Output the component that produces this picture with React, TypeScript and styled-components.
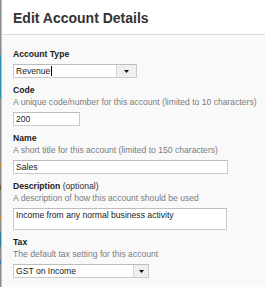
import React from 'react';
import styled, { createGlobalStyle } from 'styled-components';

const GlobalStyle = createGlobalStyle`
  html, body {
    margin: 0;
    padding: 0;
    background: #ffffff;
  }

  body {
    font-family: 'Liberation Sans', Arial, sans-serif;
  }
`;

const Frame = styled.div`
  display: flex;
  width: 265px;
  height: 287px;
  overflow: hidden;
`;

// the sliver of the app behind the dialog, visible at the far left
const Edge = styled.div`
  width: 1px;
  flex-shrink: 0;
  background: linear-gradient(
    to bottom,
    #8e8e8e 0px,
    #8e8e8e 55px,
    #2f8fae 55px,
    #2f8fae 98px,
    #8e8e8e 98px,
    #8e8e8e 163px,
    #c98a3a 163px,
    #c98a3a 167px,
    #8e8e8e 167px,
    #8e8e8e 185px,
    #7a5a3a 185px,
    #7a5a3a 190px,
    #8e8e8e 190px,
    #8e8e8e 216px,
    #c98a3a 216px,
    #c98a3a 220px,
    #8e8e8e 220px,
    #8e8e8e 232px,
    #2c8294 232px,
    #2c8294 247px,
    #8e8e8e 247px,
    #8e8e8e 260px,
    #3a6fb0 260px,
    #3a6fb0 264px,
    #8e8e8e 264px
  );
`;

const Panel = styled.div`
  flex: 1;
  display: flex;
  flex-direction: column;
  background: #f9f9f9;
  border-left: 1px solid #bdbdbd;
`;

const Header = styled.div`
  height: 35px;
  box-sizing: border-box;
  display: flex;
  align-items: center;
  padding: 2px 0 0 11px;
  background: #ffffff;
  border-bottom: 1px solid #dadada;
`;

const Title = styled.h2`
  margin: 0;
  font-size: 14px;
  font-weight: 700;
  color: #333333;
`;

const Form = styled.div`
  display: flex;
  flex-direction: column;
  gap: 6px;
  padding: 13px 0 0 11px;
`;

const Field = styled.div`
  display: flex;
  flex-direction: column;
  align-items: flex-start;
`;

const Label = styled.div<{ $spaced?: boolean }>`
  font-size: 8.6px;
  line-height: 12px;
  font-weight: 700;
  color: #1a1a1a;
  margin-bottom: ${props => (props.$spaced ? '4px' : '0')};
`;

const Optional = styled.span`
  font-weight: 400;
  color: #333333;
`;

const Hint = styled.div`
  font-size: 8.6px;
  line-height: 13px;
  color: #7c7c7c;
  margin-bottom: 3px;
  white-space: nowrap;
`;

const TextBox = styled.div<{ $width: number }>`
  width: ${props => props.$width}px;
  height: 14px;
  box-sizing: border-box;
  display: flex;
  align-items: center;
  padding-left: 2px;
  background: #ffffff;
  border: 1px solid #cbcbcb;
  border-top-color: #bdbdbd;
  font-size: 8.6px;
  color: #222222;
`;

const Area = styled.div`
  width: 214px;
  height: 22px;
  box-sizing: border-box;
  padding: 1px 0 0 2px;
  background: #ffffff;
  border: 1px solid #cbcbcb;
  border-top-color: #bdbdbd;
  font-size: 8.6px;
  line-height: 11px;
  color: #222222;
`;

const SelectBox = styled.div<{ $width: number }>`
  width: ${props => props.$width}px;
  height: 14px;
  box-sizing: border-box;
  display: flex;
  background: #ffffff;
  border: 1px solid #cbcbcb;
  border-top-color: #bdbdbd;
`;

const SelectValue = styled.div`
  flex: 1;
  display: flex;
  align-items: center;
  padding-left: 2px;
  font-size: 8.6px;
  color: #222222;
`;

const Caret = styled.span`
  display: inline-block;
  width: 1px;
  height: 10px;
  margin-left: 1px;
  background: #000000;
`;

const SelectButton = styled.div<{ $width: number }>`
  width: ${props => props.$width}px;
  display: flex;
  align-items: center;
  justify-content: center;
  background: #efefef;
  border-left: 1px solid #d6d6d6;
`;

const Arrow = () => (
  <svg width="5" height="3" viewBox="0 0 5 3">
    <path d="M0 0 H5 L2.5 3 Z" fill="#111" />
  </svg>
);

interface SelectProps {
  value: string;
  width: number;
  button: number;
  caret?: boolean;
}

const Select: React.FC<SelectProps> = ({ value, width, button, caret }) => (
  <SelectBox $width={width}>
    <SelectValue>
      {value}
      {caret && <Caret />}
    </SelectValue>
    <SelectButton $width={button}>
      <Arrow />
    </SelectButton>
  </SelectBox>
);

export default function App() {
  return (
    <>
      <GlobalStyle />
      <Frame>
        <Edge />
        <Panel>
          <Header>
            <Title>Edit Account Details</Title>
          </Header>
          <Form>
            <Field>
              <Label $spaced>Account Type</Label>
              <Select value="Revenue" width={124} button={19} caret />
            </Field>
            <Field>
              <Label>Code</Label>
              <Hint>A unique code/number for this account (limited to 10 characters)</Hint>
              <TextBox $width={67}>200</TextBox>
            </Field>
            <Field>
              <Label>Name</Label>
              <Hint>A short title for this account (limited to 150 characters)</Hint>
              <TextBox $width={215}>Sales</TextBox>
            </Field>
            <Field>
              <Label>
                Description <Optional>(optional)</Optional>
              </Label>
              <Hint>A description of how this account should be used</Hint>
              <Area>Income from any normal business activity</Area>
            </Field>
            <Field>
              <Label>Tax</Label>
              <Hint>The default tax setting for this account</Hint>
              <Select value="GST on Income" width={136} button={14} />
            </Field>
          </Form>
        </Panel>
      </Frame>
    </>
  );
}
